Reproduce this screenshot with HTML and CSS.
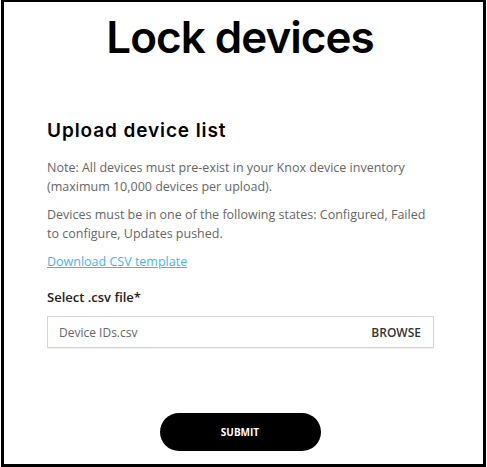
FILE: index.html
```html
<!DOCTYPE html>
<html>
<head>
<meta charset="utf-8">
<link rel="stylesheet" href="styles.css">
</head>
<body>
<div class="frame">
  <h1 class="title">Lock devices</h1>
  <section class="content">
    <h2 class="subtitle">Upload device list</h2>
    <p class="note">Note: All devices must pre-exist in your Knox device inventory (maximum 10,000 devices per upload).</p>
    <p class="note">Devices must be in one of the following states: Configured, Failed to configure, Updates pushed.</p>
    <a class="link" href="#">Download CSV template</a>
    <label class="field-label">Select .csv file*</label>
    <div class="file-input">
      <span class="file-name">Device IDs.csv</span>
      <span class="browse">BROWSE</span>
    </div>
  </section>
  <div class="actions">
    <button class="submit">SUBMIT</button>
  </div>
</div>
</body>
</html>
```
FILE: styles.css
```css
html, body {
  margin: 0;
  padding: 0;
  background: #fff;
}
body {
  width: 487px;
  height: 467px;
  overflow: hidden;
}
.frame {
  box-sizing: border-box;
  margin-left: 1px;
  width: 485px;
  height: 467px;
  border: 3px solid #000;
  border-top-width: 2px;
  display: flex;
  flex-direction: column;
}
.title {
  margin: 8px 0 0;
  padding-right: 7px;
  text-align: center;
  font-family: Inter, sans-serif;
  font-weight: 600;
  font-size: 44px;
  line-height: 54px;
  letter-spacing: -1px;
  color: #000;
}
.content {
  padding: 0 48px 0 43px;
  margin-top: 55px;
  display: flex;
  flex-direction: column;
  align-items: flex-start;
}
.subtitle {
  margin: 0 0 15px;
  font-family: Inter, sans-serif;
  font-weight: 600;
  font-size: 19px;
  line-height: 24px;
  letter-spacing: 0.9px;
  color: #000;
}
.note {
  margin: 0 0 9px;
  font-family: "Open Sans", sans-serif;
  font-size: 12.5px;
  line-height: 19px;
  color: #666;
}
.link {
  font-family: "Open Sans", sans-serif;
  font-size: 12.5px;
  line-height: 19px;
  color: #4ab4ee;
  text-decoration: underline;
}
.field-label {
  margin-top: 17px;
  font-family: "Open Sans", sans-serif;
  font-weight: 600;
  font-size: 13px;
  line-height: 19px;
  color: #222;
}
.file-input {
  box-sizing: border-box;
  margin-top: 9px;
  width: 387px;
  height: 32px;
  border: 1px solid #d4d4d4;
  box-shadow: 0 1px 1px rgba(0,0,0,0.06);
  display: flex;
  align-items: center;
  justify-content: space-between;
  padding: 0 12px 0 11px;
  font-family: "Open Sans", sans-serif;
  font-size: 12px;
}
.file-name {
  color: #666;
}
.browse {
  color: #333;
  font-weight: 600;
}
.actions {
  margin-top: auto;
  margin-bottom: 13px;
  display: flex;
  justify-content: center;
  padding-right: 7px;
}
.submit {
  width: 161px;
  height: 38px;
  border: 0;
  border-radius: 19px;
  background: #000;
  color: #fff;
  font-family: "Open Sans", sans-serif;
  font-weight: 700;
  font-size: 10px;
  padding: 0;
}
```
